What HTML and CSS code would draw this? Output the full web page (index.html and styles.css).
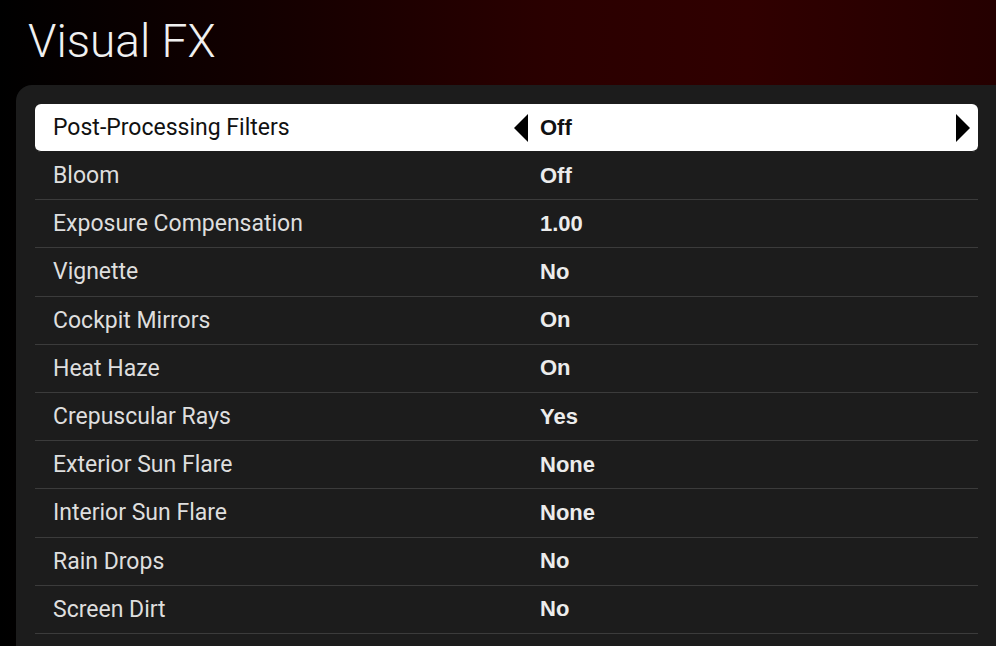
FILE: index.html
```html
<!DOCTYPE html>
<html>
<head>
<meta charset="utf-8">
<link rel="stylesheet" href="styles.css">
</head>
<body>
<div class="screen">
  <h1 class="title">Visual FX</h1>
  <div class="panel">
    <div class="list">
      <div class="row selected">
        <span class="label">Post-Processing Filters</span>
        <span class="value">
          <svg class="arrow left" viewBox="0 0 14 28"><polygon points="14,0 14,28 0,14"/></svg>
          <span class="vtext">Off</span>
          <svg class="arrow right" viewBox="0 0 14 28"><polygon points="0,0 0,28 14,14"/></svg>
        </span>
      </div>
      <div class="row"><span class="label">Bloom</span><span class="value"><span class="vtext">Off</span></span></div>
      <div class="row"><span class="label">Exposure Compensation</span><span class="value"><span class="vtext">1.00</span></span></div>
      <div class="row"><span class="label">Vignette</span><span class="value"><span class="vtext">No</span></span></div>
      <div class="row"><span class="label">Cockpit Mirrors</span><span class="value"><span class="vtext">On</span></span></div>
      <div class="row"><span class="label">Heat Haze</span><span class="value"><span class="vtext">On</span></span></div>
      <div class="row"><span class="label">Crepuscular Rays</span><span class="value"><span class="vtext">Yes</span></span></div>
      <div class="row"><span class="label">Exterior Sun Flare</span><span class="value"><span class="vtext">None</span></span></div>
      <div class="row"><span class="label">Interior Sun Flare</span><span class="value"><span class="vtext">None</span></span></div>
      <div class="row"><span class="label">Rain Drops</span><span class="value"><span class="vtext">No</span></span></div>
      <div class="row"><span class="label">Screen Dirt</span><span class="value"><span class="vtext">No</span></span></div>
    </div>
  </div>
</div>
</body>
</html>
```
FILE: styles.css
```css
html, body {
  margin: 0;
  padding: 0;
  width: 996px;
  height: 646px;
  overflow: hidden;
  background: #000;
}
.screen {
  width: 996px;
  height: 646px;
  background: linear-gradient(90deg, #000 0%, #120000 25%, #2a0000 55%, #300000 75%, #250000 100%);
  display: flex;
  flex-direction: column;
}
.title {
  margin: 0;
  padding: 13px 0 0 28px;
  height: 72px;
  box-sizing: border-box;
  font-family: Roboto, "Liberation Sans", sans-serif;
  font-weight: 300;
  font-size: 46px;
  line-height: 56px;
  color: #f0f0f0;
}
.panel {
  margin-top: 13px;
  margin-left: 16px;
  margin-right: -40px;
  flex: 1;
  background: #1c1c1c;
  border-top-left-radius: 16px;
  padding: 19px 58px 0 19px;
}
.list {
  display: flex;
  flex-direction: column;
}
.row {
  height: 47.2px;
  border-bottom: 1px solid #3b3b3b;
  display: flex;
  align-items: center;
}
.row.selected {
  height: 47px;
  background: #fff;
  border-radius: 6px;
  border-bottom-color: #1c1c1c;
}
.label {
  width: 487px;
  padding-left: 18px;
  font-family: Roboto, "Liberation Sans", sans-serif;
  font-size: 23px;
  color: #dedede;
}
.selected .label {
  color: #111;
}
.value {
  flex: 1;
  display: flex;
  align-items: center;
  height: 100%;
}
.vtext {
  font-family: "Liberation Sans", Arial, sans-serif;
  font-weight: bold;
  font-size: 22px;
  color: #ececec;
}
.selected .vtext {
  color: #111;
}
.arrow {
  width: 14px;
  height: 28px;
  fill: #000;
}
.arrow.left {
  margin-left: -26px;
  margin-right: 12px;
}
.arrow.right {
  margin-left: auto;
  margin-right: 8px;
}
```
